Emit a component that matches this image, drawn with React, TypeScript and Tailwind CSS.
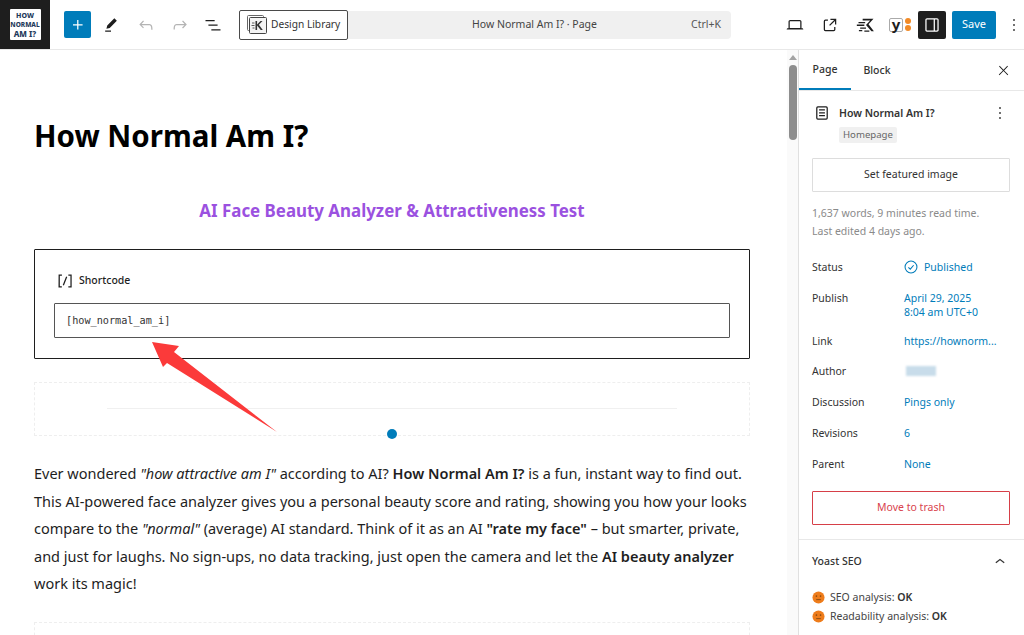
const blue = "text-[#007cba]"

function WpIcon({ d, size = 24, className = "" }: { d: string; size?: number; className?: string }) {
    return (
        <svg viewBox="0 0 24 24" width={size} height={size} className={className} fill="currentColor">
            <path d={d} />
        </svg>
    )
}

const icons = {
    plus: "M11 12.5V17.5H12.5V12.5H17.5V11H12.5V6H11V11H6V12.5H11Z",
    edit: "m19 7-3-3-8.5 8.5-1 4 4-1L19 7Zm-7 11.5H5V20h7v-1.5Z",
    undo: "M18.3 11.7c-.6-.6-1.4-.9-2.3-.9H6.7l2.9-3.3-1.1-1-4.5 5L8.5 16l1-1-2.7-2.7H16c.5 0 .9.2 1.3.5 1 1 1 3.4 1 4.5v.3h1.5v-.2c0-1.5 0-4.3-1.5-5.7z",
    redo: "M15.6 6.5l-1.1 1 2.9 3.3H8c-.9 0-1.7.3-2.3.9-1.4 1.5-1.4 4.2-1.4 5.6v.2h1.5v-.3c0-1.1 0-3.5 1-4.5.3-.3.7-.5 1.3-.5h9.2L14.5 15l1.1 1.1 4.6-4.6-4.6-5z",
    list: "M3 6h11v1.5H3V6Zm3.5 5.5h11V13h-11v-1.5ZM21 17H10v1.5h11V17Z",
    laptop: "M20.5 16h-.7V8c0-1.1-.9-2-2-2H6.2c-1.1 0-2 .9-2 2v8h-.7c-.8 0-1.5.7-1.5 1.5h20c0-.8-.7-1.5-1.5-1.5zM5.7 8c0-.3.2-.5.5-.5h11.6c.3 0 .5.2.5.5v7.6H5.7V8z",
    external: "M19.5 4.5h-7V6h4.44l-5.97 5.97 1.06 1.06L18 7.06v4.44h1.5v-7Zm-13 1a2 2 0 0 0-2 2v10a2 2 0 0 0 2 2h10a2 2 0 0 0 2-2v-3H17v3a.5.5 0 0 1-.5.5h-10a.5.5 0 0 1-.5-.5v-10a.5.5 0 0 1 .5-.5h3V5.5h-3Z",
    sidebar: "M18 4H6c-1.1 0-2 .9-2 2v12c0 1.1.9 2 2 2h12c1.1 0 2-.9 2-2V6c0-1.1-.9-2-2-2zm-4 14.5H6c-.3 0-.5-.2-.5-.5V6c0-.3.2-.5.5-.5h8v13zm4.5-.5c0 .3-.2.5-.5.5h-2.5v-13H18c.3 0 .5.2.5.5v12z",
    more: "M13 19h-2v-2h2v2zm0-6h-2v-2h2v2zm0-6h-2V5h2v2z",
    close: "M13 11.8l6.1-6.3-1-1-6.1 6.2-6.1-6.2-1 1 6.1 6.3-6.5 6.7 1 1 6.5-6.6 6.5 6.6 1-1z",
    page: "M15.5 7.5h-7V9h7V7.5Zm-7 3.5h7v1.5h-7V11Zm7 3.5h-7V16h7v-1.5ZM17 4H7a2 2 0 0 0-2 2v12a2 2 0 0 0 2 2h10a2 2 0 0 0 2-2V6a2 2 0 0 0-2-2ZM7 5.5h10a.5.5 0 0 1 .5.5v12a.5.5 0 0 1-.5.5H7a.5.5 0 0 1-.5-.5V6a.5.5 0 0 1 .5-.5Z",
    chevronUp: "M6.5 12.4L12 8l5.5 4.4-.9 1.2L12 10l-4.5 3.6-1-1.2z",
    shortcode: "M16 4.2v1.5h2.5v12.5H16v1.5h4V4.2h-4zM4.2 19.8h4v-1.5H5.8V5.8h2.5V4.2h-4l-.1 15.6zm5.1-3.1l1.4.6 4-10-1.4-.6-4 10z",
}

function KadenceMark() {
    return (
        <svg viewBox="0 0 20 20" width="20" height="20" className="text-[#333]">
            <rect x="0.5" y="0.5" width="16" height="15" rx="1" fill="none" stroke="#666" />
            <rect x="2.500" y="2.500" width="17" height="16" rx="1" fill="#f4f4f4" stroke="#444" />
            <path d="M8.500 6h1.600v3.600L13.500 6h2l-3.600 3.800L15.800 15h-2.100l-3.600-4.500V15H8.500z" fill="currentColor" />
            <path d="M5 8h2.500M4.500 10.500h3M5.500 13h2" stroke="currentColor" strokeWidth="0.8" />
        </svg>
    )
}

function KadenceLogo() {
    return (
        <svg viewBox="0 0 24 24" width="22" height="22" fill="#1e1e1e">
            <path d="M8 4.500h13L15 11l6.500 8.500h-3L12 12l5-5.500H8z" />
            <path d="M3 8.500h8v1.500H3zM1 11.500h9v1.600H1zM5 15h7v1.500H5zM3.500 18h4v1.500h-4zM10 18.500h6V20h-6z" />
        </svg>
    )
}

function YoastLogo() {
    return (
        <div className="flex items-center gap-[2px]">
            <div className="flex h-[14px] w-[14px] items-center justify-center rounded-[2px] border border-[#aaa] bg-white">
                <span className="text-[15px] font-bold leading-[13px] text-[#1e1e1e]">y</span>
            </div>
            <div className="flex flex-col gap-[1px]">
                <div className="h-[6px] w-[6px] rounded-full bg-[#f18a26]" />
                <div className="h-[6px] w-[6px] rounded-full bg-[#f18a26]" />
            </div>
        </div>
    )
}

function Header() {
    return (
        <header className="flex h-[50px] shrink-0 items-center border-b border-[#e8e8e8] bg-white">
            <div className="flex h-full w-[50px] shrink-0 items-center justify-center bg-[#1e1e1e]">
                <div className="flex h-[31px] w-[31px] flex-col items-center justify-center rounded-[1px] bg-white text-center font-extrabold leading-[9px] text-[#23395b]">
                    <span className="text-[7px]">HOW</span>
                    <span className="text-[6.5px]">NORMAL</span>
                    <span className="text-[8px]">AM I?</span>
                </div>
            </div>
            <div className="ml-[14px] flex h-[27px] w-[27px] items-center justify-center rounded-[2px] bg-[#007cba] text-white">
                <WpIcon d={icons.plus} size={20} />
            </div>
            <div className="ml-[10px] flex w-[20px] justify-center text-[#1e1e1e]"><WpIcon d={icons.edit} size={20} /></div>
            <div className="ml-[15px] flex w-[20px] justify-center text-[#b4b4b4]"><WpIcon d={icons.undo} size={20} /></div>
            <div className="ml-[14px] flex w-[20px] justify-center text-[#b4b4b4]"><WpIcon d={icons.redo} size={20} /></div>
            <div className="ml-[13px] flex w-[20px] justify-center text-[#1e1e1e]"><WpIcon d={icons.list} size={20} /></div>
            <div className="ml-[16px] flex h-[30px] w-[109px] items-center gap-[4px] rounded-[2px] border border-[#4a4a4a] pl-[7px] text-[10.2px] text-[#333]">
                <KadenceMark />
                <span>Design Library</span>
            </div>
            <div className="flex h-[28px] w-[383px] items-center rounded-r-[4px] bg-[#f0f0f0] pr-[10px] text-[10.5px] text-[#444]">
                <span className="flex-1 pl-[30px] text-center">How Normal Am I? · Page</span>
                <span className="text-[#555]">Ctrl+K</span>
            </div>
            <div className="ml-[54px] flex w-[20px] justify-center text-[#1e1e1e]"><WpIcon d={icons.laptop} size={20} /></div>
            <div className="ml-[15px] flex w-[20px] justify-center text-[#1e1e1e]"><WpIcon d={icons.external} size={20} /></div>
            <div className="ml-[16px] flex w-[20px] justify-center"><KadenceLogo /></div>
            <div className="ml-[13px] flex w-[22px] justify-center"><YoastLogo /></div>
            <div className="ml-[7px] flex h-[28px] w-[28px] items-center justify-center rounded-[2px] bg-[#1e1e1e] text-white">
                <WpIcon d={icons.sidebar} size={20} />
            </div>
            <div className="ml-[6px] flex h-[28px] w-[44px] items-center justify-center rounded-[2px] bg-[#007cba] text-[11px] text-white">Save</div>
            <div className="ml-[8px] flex w-[20px] justify-center text-[#1e1e1e]"><WpIcon d={icons.more} size={20} /></div>
        </header>
    )
}

function Editor() {
    return (
        <main className="relative min-w-0 flex-1 overflow-hidden bg-white">
            <div className="pl-[34px] pr-[48px] pt-[68px]">
                <h1 className="text-[29.5px] font-bold leading-[36px] text-black">How Normal Am I?</h1>
                <h2 className="mt-[45px] text-center text-[16.9px] font-bold leading-[24px] text-[#9b51e0]">
                    AI Face Beauty Analyzer &amp; Attractiveness Test
                </h2>
                <section className="mt-[26px] h-[110px] rounded-[1px] border border-[#1e1e1e] px-[19px] pt-[21px]">
                    <div className="flex h-[20px] items-center gap-[4px] pl-[1px] text-[10.5px] font-medium text-[#1e1e1e]">
                        <WpIcon d={icons.shortcode} size={20} />
                        <span>Shortcode</span>
                    </div>
                    <div className="mt-[12px] flex h-[35px] items-center rounded-[1px] border border-[#555] pl-[11px] text-[10.2px] text-[#333] [font-family:'DejaVu_Sans_Mono',monospace]">
                        [how_normal_am_i]
                    </div>
                </section>
                <section className="relative mt-[23px] h-[54px] border border-dashed border-[#eeeeee]">
                    <div className="mx-auto mt-[25px] h-px w-[570px] bg-[#f0f0f0]" />
                    <div className="absolute bottom-[-4px] left-1/2 h-[10px] w-[10px] -translate-x-1/2 rounded-full bg-[#007cba]" />
                </section>
                <p className="mt-[24px] whitespace-nowrap text-[14.5px] leading-[27.5px] text-[#1e1e1e]">
                    Ever wondered <em>"how attractive am I"</em> according to AI? <strong className="font-semibold">How Normal Am I?</strong> is a fun, instant way to find out.<br />
                    This AI-powered face analyzer gives you a personal beauty score and rating, showing you how your looks<br />
                    compare to the <em>"normal"</em> (average) AI standard. Think of it as an AI <strong className="font-semibold">"rate my face"</strong> – but smarter, private,<br />
                    and just for laughs. No sign-ups, no data tracking, just open the camera and let the <strong className="font-semibold">AI beauty analyzer</strong><br />
                    work its magic!
                </p>
                <div className="mt-[24px] h-[40px] border border-dashed border-[#eeeeee]" />
            </div>

            {/* scrollbar */}
            <div className="absolute inset-y-0 right-0 flex w-[11px] flex-col items-center bg-[#fafafa] pt-[5px]">
                <div className="h-0 w-0 border-x-[4px] border-b-[5px] border-x-transparent border-b-[#a3a3a3]" />
                <div className="mt-[5px] h-[75px] w-[8px] rounded-[4px] bg-[#8d8d8d]" />
            </div>

            {/* annotation arrow */}
            <svg className="pointer-events-none absolute left-0 top-0" width="300" height="450" viewBox="0 50 300 450">
                <polygon points="152,342 179,346 174,352 277,432 167,363 163,367" fill="#fb3a3a" />
            </svg>
        </main>
    )
}

function MetaRow({ label, children, className = "" }: { label: string; children: React.ReactNode; className?: string }) {
    return (
        <div className={`flex text-[10.5px] leading-[14px] ${className}`}>
            <div className="w-[92px] shrink-0 text-[#333]">{label}</div>
            <div className={blue}>{children}</div>
        </div>
    )
}

function Smiley() {
    return (
        <svg viewBox="0 0 14 14" width="13" height="13">
            <circle cx="7" cy="7" r="6.500" fill="#ee7c1b" />
            <circle cx="4.800" cy="5.500" r="0.900" fill="#8a4a10" />
            <circle cx="9.200" cy="5.500" r="0.900" fill="#8a4a10" />
            <rect x="4.500" y="8.800" width="5" height="1" fill="#8a4a10" />
        </svg>
    )
}

function Sidebar() {
    return (
        <aside className="flex w-[226px] shrink-0 flex-col overflow-hidden border-l border-[#e0e0e0] bg-white text-[#1e1e1e]">
            <div className="flex h-[41px] shrink-0 items-stretch border-b border-[#e8e8e8] text-[10.5px] font-medium">
                <div className="flex w-[52px] items-center justify-center border-b-2 border-[#007cba] pt-[2px] text-[#333]">Page</div>
                <div className="flex w-[52px] items-center justify-center pt-[2px] text-[#333]">Block</div>
                <div className="ml-auto mr-[13px] flex items-center"><WpIcon d={icons.close} size={15} /></div>
            </div>
            <div className="border-b border-[#e8e8e8] pb-[14px] pl-[13px] pr-[14px]">
                <div className="mt-[13px] flex items-start">
                    <WpIcon d={icons.page} size={20} className="mt-[-1px]" />
                    <div className="ml-[7px] text-[10.5px] font-semibold leading-[18px] text-[#333]">How Normal Am I?</div>
                    <WpIcon d={icons.more} size={20} className="ml-auto mt-[-1px]" />
                </div>
                <div className="ml-[27px] mt-[4px] w-fit rounded-[2px] bg-[#f0f0f0] px-[4px] text-[9.6px] leading-[16px] text-[#666]">Homepage</div>
                <div className="mt-[15px] flex h-[34px] items-center justify-center rounded-[1px] border border-[#ddd] text-[10.5px] text-[#333]">Set featured image</div>
                <div className="mt-[12px] text-[10.5px] leading-[18px] text-[#8a8a8a]">
                    <div>1,637 words, 9 minutes read time.</div>
                    <div>Last edited 4 days ago.</div>
                </div>
                <MetaRow label="Status" className="mt-[20px]">
                    <span className="flex items-center gap-[6px]">
                        <svg viewBox="0 0 16 16" width="14" height="14" fill="none" stroke="currentColor" strokeWidth="1.200">
                            <circle cx="8" cy="8" r="6.800" />
                            <path d="M5 8.300l2.200 2.200L11 6" />
                        </svg>
                        Published
                    </span>
                </MetaRow>
                <MetaRow label="Publish" className="mt-[17px]">April 29, 2025<br />8:04 am UTC+0</MetaRow>
                <MetaRow label="Link" className="mt-[15px]">https://hownorm...</MetaRow>
                <MetaRow label="Author" className="mt-[16px]">
                    <div className="ml-[2px] mt-[2px] h-[10px] w-[30px] bg-[#c8dcea] blur-[1px]" />
                </MetaRow>
                <MetaRow label="Discussion" className="mt-[17px]">Pings only</MetaRow>
                <MetaRow label="Revisions" className="mt-[17px]">6</MetaRow>
                <MetaRow label="Parent" className="mt-[17px]">None</MetaRow>
                <div className="mt-[20px] flex h-[34px] items-center justify-center rounded-[1px] border border-[#d63f48] text-[10.5px] text-[#d9434e]">Move to trash</div>
            </div>
            <div className="pl-[13px] pr-[14px]">
                <div className="mt-[12px] flex items-center justify-between text-[10.5px] font-medium text-[#333]">
                    <span>Yoast SEO</span>
                    <WpIcon d={icons.chevronUp} size={20} />
                </div>
                <div className="mt-[16px] flex items-center gap-[5px] text-[10.5px] leading-[19px] text-[#444]">
                    <Smiley /><span>SEO analysis: <b className="font-semibold text-[#333]">OK</b></span>
                </div>
                <div className="flex items-center gap-[5px] text-[10.5px] leading-[19px] text-[#444]">
                    <Smiley /><span>Readability analysis: <b className="font-semibold text-[#333]">OK</b></span>
                </div>
            </div>
        </aside>
    )
}

export default function App() {
    return (
        <div className="flex h-screen w-screen flex-col overflow-hidden bg-white [font-family:'Noto_Sans',sans-serif]">
            <Header />
            <div className="flex min-h-0 flex-1">
                <Editor />
                <Sidebar />
            </div>
        </div>
    )
}
